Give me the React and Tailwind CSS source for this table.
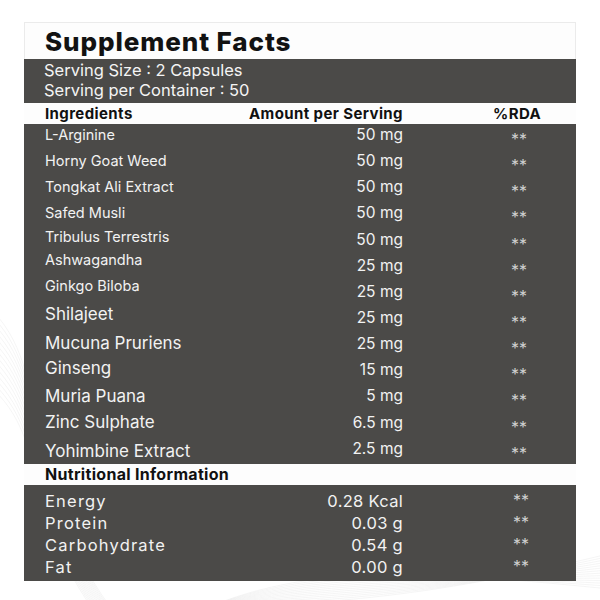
import React from "react";

const ingredients = [
  { name: "L-Arginine", amt: "50 mg", cls: "text-[14.5px]", off: "mt-0" },
  { name: "Horny Goat Weed", amt: "50 mg", cls: "text-[14.5px]", off: "mt-0" },
  { name: "Tongkat Ali Extract", amt: "50 mg", cls: "text-[14.5px]", off: "mt-0" },
  { name: "Safed Musli", amt: "50 mg", cls: "text-[14.5px]", off: "mt-0" },
  { name: "Tribulus Terrestris", amt: "50 mg", cls: "text-[14.5px]", off: "-mt-[3px]" },
  { name: "Ashwagandha", amt: "25 mg", cls: "text-[14.5px]", off: "-mt-[6px]" },
  { name: "Ginkgo Biloba", amt: "25 mg", cls: "text-[14.5px]", off: "-mt-[6px]" },
  { name: "Shilajeet", amt: "25 mg", cls: "text-[17px]", off: "-mt-[4px]" },
  { name: "Mucuna Pruriens", amt: "25 mg", cls: "text-[17px]", off: "-mt-[1px]" },
  { name: "Ginseng", amt: "15 mg", cls: "text-[17px]", off: "-mt-[2px]" },
  { name: "Muria Puana", amt: "5 mg", cls: "text-[17px]", off: "mt-0" },
  { name: "Zinc Sulphate", amt: "6.5 mg", cls: "text-[17px]", off: "-mt-[1px]" },
  { name: "Yohimbine Extract", amt: "2.5 mg", cls: "text-[17px]", off: "mt-[2px]" },
];

const nutrition = [
  { name: "Energy", amt: "0.28 Kcal" },
  { name: "Protein", amt: "0.03 g" },
  { name: "Carbohydrate", amt: "0.54 g" },
  { name: "Fat", amt: "0.00 g" },
];

function Waves() {
  const lines = [];
  for (let i = 0; i < 14; i++) {
    const d = i * 6;
    lines.push(
      <path
        key={"a" + i}
        d={`M -20 ${300 + d} C 60 ${360 + d}, 10 ${480 + d * 0.5}, 120 ${620 + d * 0.3}`}
      />
    );
    lines.push(
      <path
        key={"b" + i}
        d={`M 180 ${620 - d * 0.2} C 300 ${560 + d * 0.6}, 420 ${570 + d * 0.4}, 620 ${590 - d * 0.5}`}
      />
    );
  }
  return (
    <svg
      className="absolute inset-0 h-full w-full"
      viewBox="0 0 600 600"
      fill="none"
      stroke="#efefef"
      strokeWidth="0.6"
    >
      {lines}
    </svg>
  );
}

export default function App() {
  return (
    <div
      className="relative h-[600px] w-[600px] overflow-hidden bg-white"
      style={{ fontFamily: "Inter, 'Noto Sans', sans-serif" }}
    >
      <Waves />
      <div className="relative ml-[24px] mt-[22px] w-[552px] border border-[#ebebeb] border-b-0 bg-[#fdfdfd]">
        <div className="h-[36px] pl-[20px] text-[26px] font-extrabold leading-[37px] tracking-[0.9px] text-[#121212]">
          Supplement Facts
        </div>
      </div>
      <div className="relative ml-[24px] w-[552px]">
        <div className="h-[44px] bg-[#4b4a48] pl-[20px] pt-[1px] text-[16.5px] leading-[20px] text-[#f4f4f4]">
          <div>Serving Size : 2 Capsules</div>
          <div>Serving per Container : 50</div>
        </div>
        <div className="flex h-[21px] items-center bg-[#fdfdfd] pl-[21px] text-[15px] font-bold leading-[21px] tracking-[0.4px] text-[#111]">
          <div className="w-[200px]">Ingredients</div>
          <div className="w-[158px] text-right">Amount per Serving</div>
          <div className="ml-[90px]">%RDA</div>
        </div>
        <div className="bg-[#4b4a48] text-[#f2f2f2]">
          {ingredients.map((r) => (
            <div key={r.name} className="flex h-[26.15px] items-start pl-[21px]">
              <div className={`w-[200px] leading-[22px] ${r.cls} ${r.off}`}>{r.name}</div>
              <div className="w-[158px] text-right text-[15.5px] leading-[22px]">{r.amt}</div>
              <div className="ml-[108px] pt-[5px] text-[16px] leading-[20px] text-[#d0d0d0]">**</div>
            </div>
          ))}
        </div>
        <div className="flex h-[21px] items-center bg-[#fdfdfd] pl-[21px] text-[16px] font-bold leading-[21px] tracking-[0.3px] text-[#111]">
          Nutritional Information
        </div>
        <div className="bg-[#4b4a48] pb-[3px] pt-[5px] text-[#f2f2f2]">
          {nutrition.map((r) => (
            <div key={r.name} className="flex h-[22px] items-center pl-[21px]">
              <div className="w-[200px] text-[16.5px] leading-[22px] tracking-[1.2px]">{r.name}</div>
              <div className="w-[158px] text-right text-[16.5px] leading-[22px] tracking-[0.3px]">{r.amt}</div>
              <div className="ml-[110px] -mt-[2px] text-[16px] leading-[20px] text-[#d0d0d0]">**</div>
            </div>
          ))}
        </div>
      </div>
    </div>
  );
}
